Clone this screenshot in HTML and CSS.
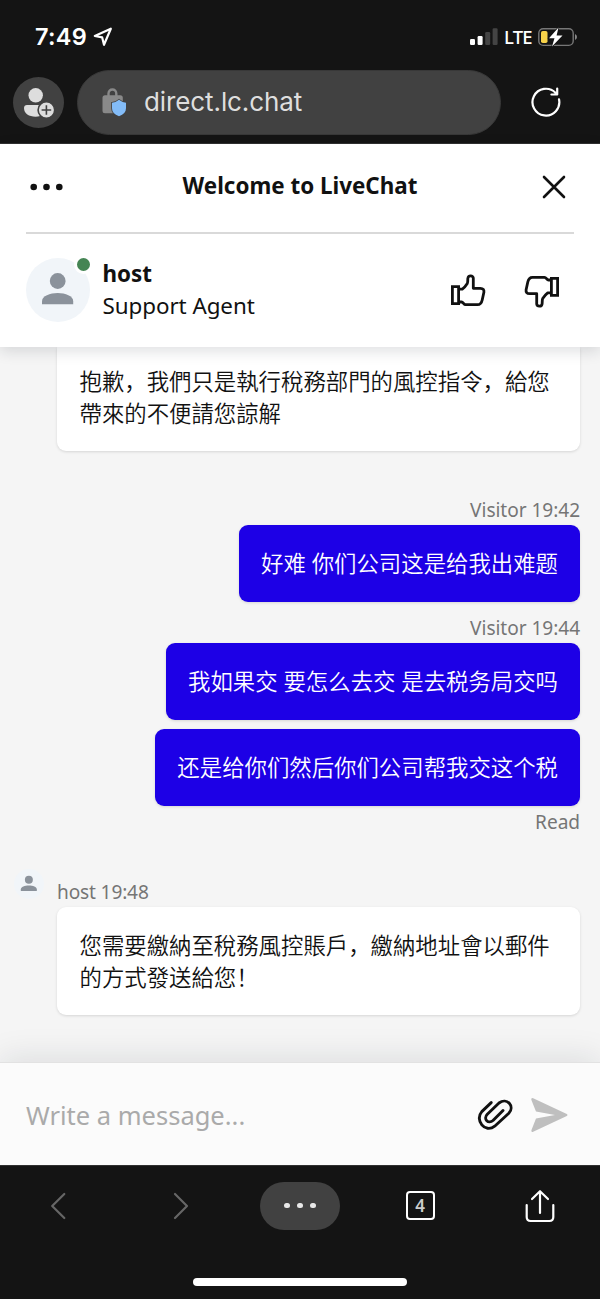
FILE: index.html
```html
<!DOCTYPE html>
<html lang="zh-CN">
<head>
<meta charset="utf-8">
<title>Welcome to LiveChat</title>
<link rel="stylesheet" href="styles.css">
</head>
<body>
<div class="screen">
  <div class="browser-top">
    <div class="status">
      <span class="time">7:49</span>
      <svg class="location" width="20" height="20" viewBox="0 0 20 20"><path d="M1.800 9 17.800 1.700 11 17.800 9.200 10.400Z" fill="none" stroke="#fff" stroke-width="2.200" stroke-linejoin="round"/></svg>
      <svg class="signal" width="28" height="18" viewBox="0 0 28 18"><g fill="#fff"><rect x="0" y="11" width="5" height="6" rx="1.200"/><rect x="7.600" y="8" width="5" height="9" rx="1.200"/></g><g fill="#444"><rect x="15.200" y="4" width="5" height="13" rx="1.200"/><rect x="22.600" y="0.300" width="5" height="16.700" rx="1.200"/></g></svg>
      <span class="lte">LTE</span>
      <svg class="battery" width="40" height="20" viewBox="0 0 40 20"><rect x="0.800" y="1.800" width="34.400" height="16.600" rx="4.400" fill="none" stroke="#777" stroke-width="1.400"/><path d="M37 7v6q2-1 2-3t-2-3Z" fill="#888"/><rect x="3" y="4" width="6.500" height="12" rx="1.800" fill="#f8d34a"/><path d="M20.500.500 11 11.200h5.500L14 19.500 24.500 8.400h-5.900Z" fill="#fff" stroke="#141414" stroke-width="1.400" paint-order="stroke"/></svg>
    </div>
    <div class="address-row">
      <div class="profile"><svg width="51" height="51" viewBox="0 0 51 51"><g fill="#ddd"><circle cx="22.700" cy="18.300" r="7.200"/><path d="M14 28h18c2 0 3 1.400 3 3 0 5.500-6 8.700-12.500 8.700S11 36.500 11 31c0-1.700 1.200-3 3-3Z"/></g><circle cx="33.400" cy="33" r="8.300" fill="#ddd" stroke="#414141" stroke-width="1.600"/><path d="M33.400 28.200v9.600M28.600 33h9.600" stroke="#414141" stroke-width="1.600"/></svg></div>
      <div class="address">
        <svg width="26" height="30" viewBox="0 0 26 30"><path d="M6.500 9V6.400a3.900 3.900 0 0 1 7.800 0V9" fill="none" stroke="#898989" stroke-width="2.400"/><rect x="0.500" y="8.300" width="20.300" height="18" rx="2.500" fill="#898989"/><path d="M17 12.800q3 2.600 7 3v5.500q0 5.500-7 8-7-2.500-7-8v-5.500q4-.400 7-3Z" fill="#83bcf8" stroke="#414141" stroke-width="1.600" paint-order="stroke"/></svg>
        <span>direct.lc.chat</span>
      </div>
      <svg class="reload" width="32" height="32" viewBox="0 0 32 32" fill="none" stroke="#fff" stroke-width="2.200" stroke-linecap="round" stroke-linejoin="round"><path d="M29 13.300A13.400 13.400 0 1 1 25.500 6.800M27.200 2.500v6h-5.800"/></svg>
    </div>
  </div>

  <header class="header">
    <div class="title-row">
      <svg width="34" height="8" viewBox="0 0 34 8" fill="#111"><circle cx="3.700" cy="4" r="3.300"/><circle cx="16.500" cy="4" r="3.300"/><circle cx="29.300" cy="4" r="3.300"/></svg>
      <h1>Welcome to LiveChat</h1>
      <svg width="26" height="26" viewBox="0 0 26 26" stroke="#111" stroke-width="2.600" stroke-linecap="round"><path d="m3 3 20 20M23 3 3 23"/></svg>
    </div>
    <div class="agent-row">
      <div class="avatar">
        <svg width="64" height="64" viewBox="0 0 64 64" fill="#8b929b"><circle cx="31.700" cy="23" r="7.900"/><path d="M16 46.300v-3.100c0-5.200 8-8.200 15.700-8.200s15.500 3 15.500 8.200v3.100Z"/></svg>
        <i class="online"></i>
      </div>
      <div class="agent"><strong>host</strong><span>Support Agent</span></div>
      <svg class="thumb-up" width="36" height="36" viewBox="0 0 36 36" fill="none" stroke="#111" stroke-width="2.800" stroke-linejoin="round"><path d="M2.400 13.700h6.200v17H2.400Z" stroke-linejoin="miter"/><path d="M8.500 16.200h3.800C14.300 14.700 16 12.500 17.300 10.500c.800-1.800.200-4 .700-5.800.600-2.500 4.800-2.500 5.300.300V15.300h7c3 0 3.900 1.600 3.600 4l-1.700 7.700c-.700 3.300-2 4.700-4.700 4.700H15.500c-1.800 0-2.200-2.700-4-2.700h-3"/></svg>
      <svg class="thumb-down" width="36" height="36" viewBox="0 0 36 36" fill="none" stroke="#111" stroke-width="2.800" stroke-linejoin="round"><g transform="rotate(180 18 18)"><path d="M2.400 13.700h6.200v17H2.400Z" stroke-linejoin="miter"/><path d="M8.500 16.200h3.800C14.300 14.700 16 12.500 17.300 10.500c.800-1.800.200-4 .700-5.800.600-2.500 4.800-2.500 5.300.300V15.300h7c3 0 3.900 1.600 3.600 4l-1.700 7.700c-.700 3.300-2 4.700-4.700 4.700H15.500c-1.800 0-2.200-2.700-4-2.700h-3"/></g></svg>
    </div>
  </header>

  <main class="chat">
    <div class="bubble host clipped">抱歉，我們只是執行稅務部門的風控指令，給您帶來的不便請您諒解</div>
    <div class="label first">Visitor 19:42</div>
    <div class="bubble visitor">好难 你们公司这是给我出难题</div>
    <div class="label second">Visitor 19:44</div>
    <div class="bubble visitor">我如果交 要怎么去交 是去税务局交吗</div>
    <div class="bubble visitor next">还是给你们然后你们公司帮我交这个税</div>
    <div class="label read">Read</div>
    <div class="host-label">
      <div class="mini"><svg width="30" height="30" viewBox="0 0 64 64" fill="#8b929b"><circle cx="31.700" cy="23" r="8.500"/><path d="M14.500 47v-3.500c0-5.500 8.500-8.500 17.200-8.500s17 3 17 8.500V47Z"/></svg></div>
      <div class="label">host 19:48</div>
    </div>
    <div class="bubble host">您需要繳納至稅務風控賬戶，繳納地址會以郵件的方式發送給您！</div>
  </main>

  <footer class="composer">
    <span>Write a message...</span>
    <svg class="clip" width="36" height="34" viewBox="0 0 36 34" fill="none" stroke="#111" stroke-width="2.900" stroke-linecap="round" stroke-linejoin="round"><path d="M14.200 3.600 4.800 12.600C-2.600 21 8 34.800 17.700 27.200L31.800 14.200C38.200 7.500 30-2 22 4L10.300 15.300C5.800 20 11.500 25.500 16 21.500L26 11.500"/></svg>
    <svg class="send" width="40" height="36" viewBox="0 0 40 36"><path d="M2.300 2.800Q2 .500 4.200 1.300L37.800 17q1.600 1 0 2L4.200 34.700Q2 35.500 2.400 33.200L7 21.500 26 18 7 14.500Z" fill="#bfbfbf"/></svg>
  </footer>

  <nav class="browser-nav">
    <div class="nav-row">
      <svg class="back" width="16" height="28" viewBox="0 0 16 28" fill="none" stroke="#666" stroke-width="2.200" stroke-linecap="round" stroke-linejoin="round"><path d="M14.300 2 2.200 14l12.100 12"/></svg>
      <svg class="forward" width="16" height="28" viewBox="0 0 16 28" fill="none" stroke="#666" stroke-width="2.200" stroke-linecap="round" stroke-linejoin="round"><path d="m2 2 12 12L2 26"/></svg>
      <div class="more"><i></i><i></i><i></i></div>
      <div class="tabs">4</div>
      <svg width="30" height="34" viewBox="0 0 30 34" fill="none" stroke="#fff" stroke-width="2.200" stroke-linecap="round" stroke-linejoin="round"><path d="M15 24V2.500M7 10l8-7.800L23 10M1.700 16v12q0 4 4 4h18.600q4 0 4-4V16"/></svg>
    </div>
    <div class="home"></div>
  </nav>
</div>
</body>
</html>
```
FILE: styles.css
```css
* { box-sizing: border-box; }
body { margin: 0; background: #141414; }
svg { display: block; flex: none; }
.screen {
  width: 600px; height: 1299px; overflow: hidden;
  display: flex; flex-direction: column;
  font-family: "Noto Sans", "Noto Sans CJK SC", sans-serif;
  font-size: 22.4px; line-height: 32px; color: #111;
}
.browser-top { height: 144px; flex: none; background: #141414; border-bottom: 1px solid #303030; color: #fff; }
.status { height: 70px; padding: 4px 22px 0 35px; display: flex; align-items: center; }
.time { font: 600 23.5px/30px Inter, sans-serif; width: 58px; letter-spacing: .3px; white-space: nowrap; }
.signal { margin-left: auto; }
.lte { font-size: 18.5px; line-height: 26px; margin: 0 7px 0 6px; width: 27px; letter-spacing: -.8px; font-weight: 500; }
.address-row { display: flex; align-items: center; height: 65px; padding: 0 39px 0 13px; }
.profile { width: 51px; height: 51px; border-radius: 50%; background: #414141; }
.address {
  width: 424px; height: 65px; margin-left: 13px; padding: 0 0 1px 24px;
  border-radius: 33px; background: #414141; border: 1px solid #383838;
  display: flex; align-items: center; gap: 16px;
  font: 400 26px/36px Inter, sans-serif; letter-spacing: -.1px; color: #dedede;
}
.reload { margin: -1px -1px 0 auto; }

.header { position: relative; z-index: 1; flex: none; height: 203px; padding: 0 26px; background: #fff; box-shadow: 0 4px 14px rgba(20, 25, 40, .14); }
.title-row { height: 90px; padding: 0 7px 3px 4px; border-bottom: 2px solid #d9d9d9; display: flex; align-items: center; justify-content: space-between; }
.title-row h1 { margin: -2px 5px 0 0; font-size: 22.4px; line-height: 32px; font-weight: 700; }
.agent-row { display: flex; align-items: center; height: 112px; padding-right: 14px; }
.avatar { position: relative; width: 64px; height: 64px; border-radius: 50%; background: #f1f5f9; }
.online { position: absolute; top: -3px; right: -3px; width: 19px; height: 19px; border: 3px solid #fff; border-radius: 50%; background: #458554; }
.agent { display: flex; flex-direction: column; margin-left: 12.5px; }
.agent span { letter-spacing: -.06px; }
.thumb-up { margin: 1px 0 0 auto; }
.thumb-down { margin: 1px 0 0 38px; }

.chat { flex: 1; min-height: 0; padding: 0 20px 0 57px; background: #f5f5f5; display: flex; flex-direction: column; }
.bubble { flex: none; padding: 22px 22.5px; border-radius: 9px; box-shadow: 0 1px 3px rgba(0, 0, 0, .13); font-weight: 350; }
.host { padding: 20.5px 22.5px 23.5px; background: #fff; font-family: "Noto Sans CJK SC", sans-serif; }
.clipped { padding-top: 16.5px; border-radius: 0 0 9px 9px; }
.visitor { align-self: flex-end; height: 76.5px; padding: 23px 22px 21px; background: #1d00e6; color: #fff; white-space: nowrap; }
.next { margin-top: 9.5px; }
.label { flex: none; font-size: 19.1px; line-height: 29px; letter-spacing: -.05px; color: #757575; text-align: right; }
.first { margin-top: 45px; }
.second { margin-top: 12.5px; }
.read { margin-top: 2px; }
.host-label { display: flex; height: 41px; margin: 29.5px 0 0 -43px; }
.mini { width: 30px; height: 30px; margin-top: 3px; border-radius: 50%; background: #f1f5f9; }
.host-label .label { margin: 12px 0 0 13px; letter-spacing: -.15px; }

.composer { position: relative; flex: none; height: 103px; padding: 2px 31px 0 26px; background: #fbfbfb; border-top: 1px solid #e2e2e2; box-shadow: 0 -5px 30px rgba(20, 25, 40, .1); display: flex; align-items: center; }
.composer span { flex: 1; font-size: 25.5px; color: #aaa; }
.clip { margin-top: 2px; }
.send { margin-left: 16px; }

.browser-nav { position: relative; flex: none; height: 134px; background: #141414; border-top: 1px solid #303030; }
.nav-row { display: grid; grid-template-columns: repeat(5, 120px); place-items: center; height: 79px; }
.back { margin-right: 4px; }
.forward { margin-left: 2px; }
.more { width: 80px; height: 48px; border-radius: 24px; background: #414141; display: flex; align-items: center; justify-content: center; gap: 7.5px; }
.more i { width: 5.5px; height: 5.5px; border-radius: 50%; background: #e8e8e8; }
.tabs { width: 29px; height: 29px; border: 2px solid #fff; border-radius: 4px; font: 600 17px/25px "Noto Sans", sans-serif; text-align: center; color: #ccc; }
.home { width: 214px; height: 8px; margin: 33px auto 0; border-radius: 4px; background: #fff; }
```
